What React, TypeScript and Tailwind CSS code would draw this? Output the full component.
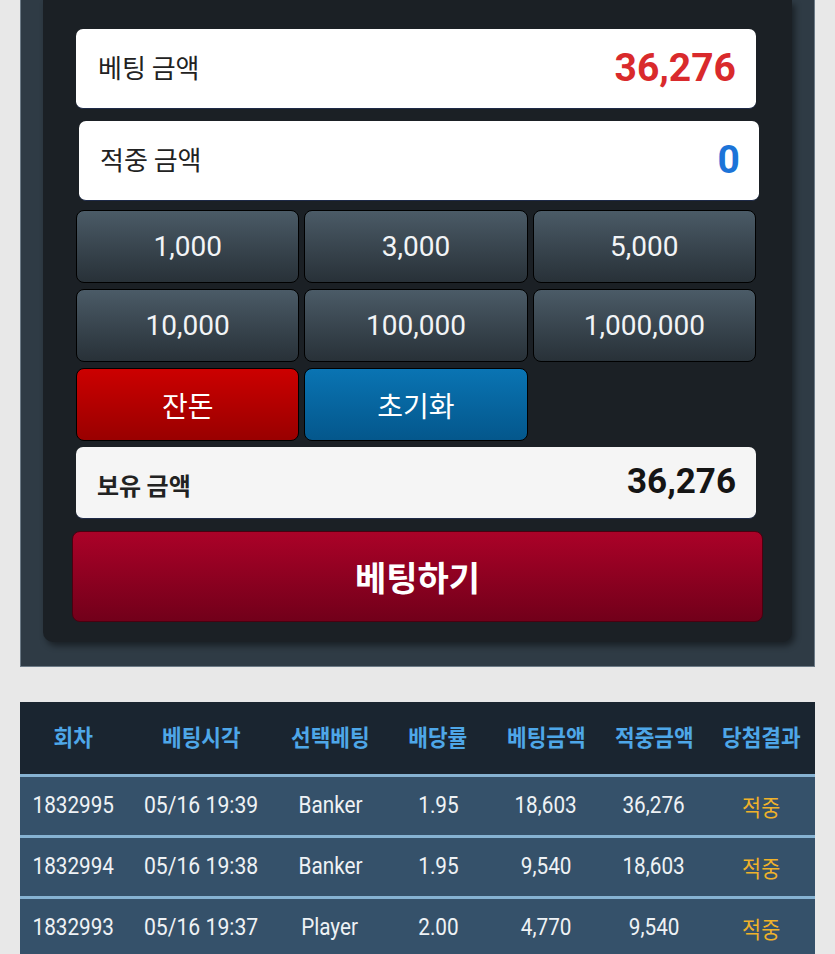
import React from 'react'

const KR = "font-['Noto_Sans_CJK_KR','Noto_Sans',sans-serif]"
const NUM = "font-['Roboto','Noto_Sans_CJK_KR',sans-serif]"

const chips = ['1,000', '3,000', '5,000', '10,000', '100,000', '1,000,000']

interface BetRow {
  round: string
  time: string
  pick: string
  odds: string
  bet: string
  win: string
  result: string
}

const rows: BetRow[] = [
  { round: '1832995', time: '05/16 19:39', pick: 'Banker', odds: '1.95', bet: '18,603', win: '36,276', result: '적중' },
  { round: '1832994', time: '05/16 19:38', pick: 'Banker', odds: '1.95', bet: '9,540', win: '18,603', result: '적중' },
  { round: '1832993', time: '05/16 19:37', pick: 'Player', odds: '2.00', bet: '4,770', win: '9,540', result: '적중' }
]

const headers = ['회차', '베팅시각', '선택베팅', '배당률', '베팅금액', '적중금액', '당첨결과']
const colW = ['w-[106px]', 'w-[150px]', 'w-[108px]', 'w-[108px]', 'w-[108px]', 'w-[108px]', 'w-[107px]']

const Cell: React.FC<{ idx: number; className?: string; children: React.ReactNode }> = ({
  idx,
  className,
  children
}) => (
  <div className={`${colW[idx]} shrink-0 flex items-center justify-center`}>
    <span className={`inline-block whitespace-nowrap ${className ?? ''}`}>{children}</span>
  </div>
)

const App: React.FC = () => {
  return (
    <div className={`min-h-screen bg-[#e8e8e8] px-[20px] ${KR}`}>
      {/* betting panel */}
      <div className="bg-[#2f3b45] border-x border-b border-[#6c7a86] pl-[22px] pr-[22px] pb-[24px]">
        <div className="bg-[#1b2025] rounded-b-[10px] shadow-[3px_4px_6px_rgba(0,0,0,0.45)] pt-[29px] pb-[20px] pl-[33px] pr-[36px]">
          <div className="h-[80px] bg-white rounded-[7px] border-b border-[#1e2a48] flex items-center justify-between pl-[22px] pr-[20px]">
            <span className="text-[26px] text-[#222] -mt-[4px]">베팅 금액</span>
            <span className={`${NUM} text-[39px] font-bold text-[#d92a2c]`}>36,276</span>
          </div>
          <div className="h-[80px] mt-[12px] ml-[3px] -mr-[3px] bg-white rounded-[7px] border-b border-[#1e2a48] flex items-center justify-between pl-[21px] pr-[19px]">
            <span className="text-[26px] text-[#222] -mt-[4px]">적중 금액</span>
            <span className={`${NUM} text-[39px] font-bold text-[#1c74d8]`}>0</span>
          </div>

          <div className="grid grid-cols-3 gap-x-[5px] gap-y-[6px] mt-[9px]">
            {chips.map((c) => (
              <div
                key={c}
                className={`${NUM} h-[73px] rounded-[8px] border border-black bg-gradient-to-b from-[#4b5b67] to-[#283138] flex items-center justify-center text-[28px] text-[#f2f4f6]`}
              >
                {c}
              </div>
            ))}
            <div className="h-[73px] rounded-[8px] border border-black bg-gradient-to-b from-[#cc0000] to-[#990000] flex items-center justify-center text-[28px] text-white">
              잔돈
            </div>
            <div className="h-[73px] rounded-[8px] border border-black bg-gradient-to-b from-[#0a74b3] to-[#04578c] flex items-center justify-center text-[28px] text-white">
              초기화
            </div>
          </div>

          <div className="h-[72px] mt-[6px] bg-[#f5f5f5] rounded-[7px] border-b border-[#1e2a48] flex items-center justify-between pl-[21px] pr-[20px]">
            <span className="text-[24px] font-bold text-[#222] mt-[4px]">보유 금액</span>
            <span className={`${NUM} text-[35px] font-bold text-[#151515]`}>36,276</span>
          </div>

          <div className="h-[91px] mt-[12px] -ml-[4px] -mr-[7px] rounded-[8px] border border-[#4a0010] bg-gradient-to-b from-[#ab0228] to-[#72001a] flex items-center justify-center text-[34px] font-bold text-white">
            베팅하기
          </div>
        </div>
      </div>

      {/* history table */}
      <div className="mt-[35px]">
        <div className="h-[72px] bg-[#1a2530] flex text-[23px] font-bold text-[#4ea7e8]">
          {headers.map((h, i) => (
            <Cell key={h} idx={i} className="scale-x-[0.93] -mt-[3px]">
              {h}
            </Cell>
          ))}
        </div>
        {rows.map((r) => (
          <div
            key={r.round}
            className={`${NUM} h-[61px] bg-[#35516a] border-t-[3px] border-[#86b2d2] flex text-[23px] text-[#eef2f5]`}
          >
            <Cell idx={0} className="scale-x-[0.9]">{r.round}</Cell>
            <Cell idx={1} className="scale-x-[0.92]">{r.time}</Cell>
            <Cell idx={2} className="scale-x-[0.9]">{r.pick}</Cell>
            <Cell idx={3} className="scale-x-[0.9]">{r.odds}</Cell>
            <Cell idx={4} className="scale-x-[0.9]">{r.bet}</Cell>
            <Cell idx={5} className="scale-x-[0.9]">{r.win}</Cell>
            <Cell idx={6} className={`${KR} scale-x-[0.9] text-[#f0b22a]`}>
              {r.result}
            </Cell>
          </div>
        ))}
      </div>
    </div>
  )
}

export default App
